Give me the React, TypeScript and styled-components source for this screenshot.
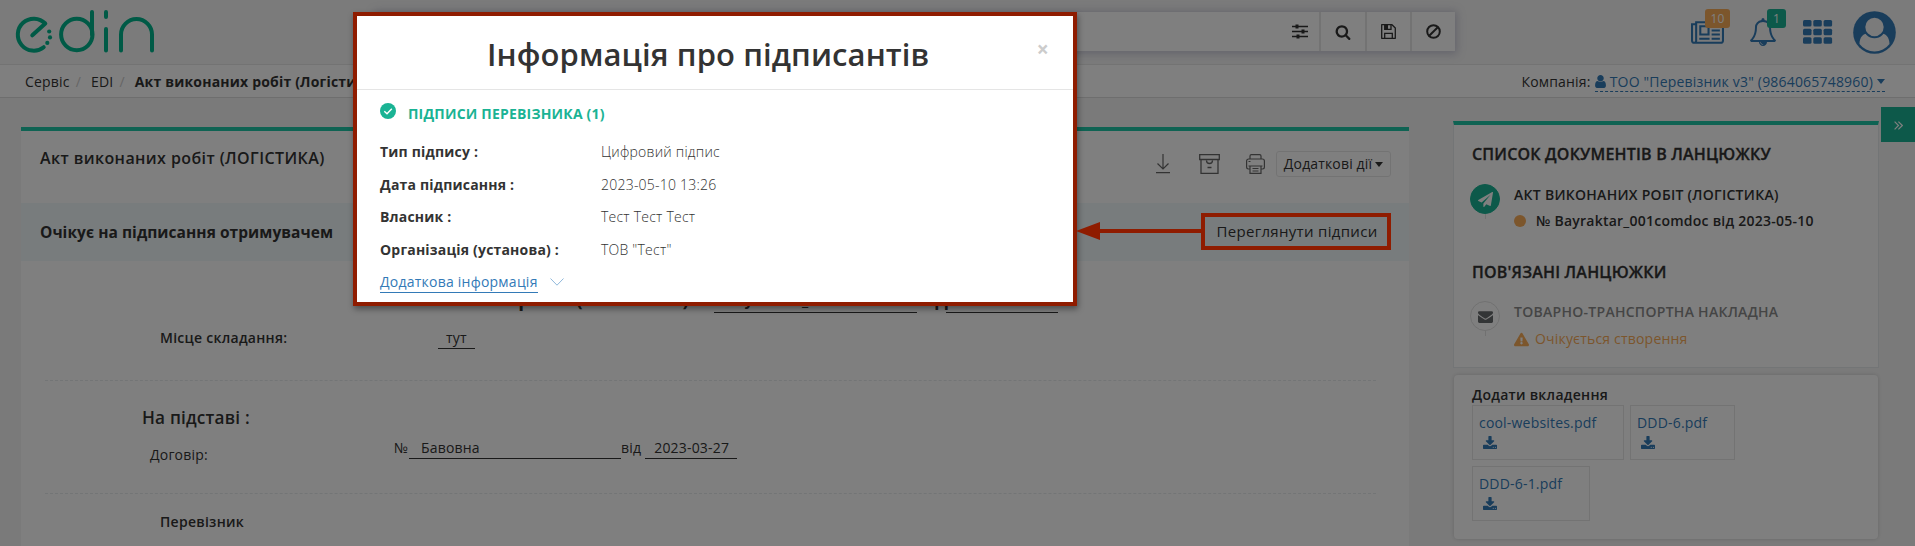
import React from 'react';
import styled, { createGlobalStyle } from 'styled-components';
import { FaExclamationTriangle } from 'react-icons/fa';

const GlobalStyle = createGlobalStyle`
  * { box-sizing: border-box; }
  body {
    margin: 0;
    background: #f5f5f5;
    color: #333;
    font-family: 'Open Sans', 'Liberation Sans', sans-serif;
    font-size: 14px;
    letter-spacing: 0.19px;
    line-height: 20px;
    overflow: hidden;
  }
  h1, h2, h3, h4, p { margin: 0; }
  svg { display: block; flex: none; }
`;

const teal = '#1ab394';
const blue = '#337ab7';
const orange = '#f8ac59';
const red = '#8f1c00';

const Page = styled.div`
  position: relative;
  height: 546px;
  overflow: hidden;
`;

/* ---------- header ---------- */
const Header = styled.header`
  display: flex;
  justify-content: space-between;
  height: 65px;
  border-bottom: 1px solid #e7e7e7;
  background: #f6f6f6;
`;
const LogoLink = styled.a`
  padding: 8px 0 0 14px;
  width: 376px;
`;
const SearchBar = styled.div`
  display: flex;
  justify-content: flex-end;
  width: 1079px;
  height: 39px;
  margin-top: 12px;
  background: #fff;
  box-shadow: 0 1px 8px 2px rgba(120, 120, 160, 0.35);
`;
const SearchButton = styled.button<{ $first?: boolean; $w: number }>`
  display: flex;
  align-items: center;
  justify-content: center;
  width: ${(p) => p.$w}px;
  padding: 0;
  border: 0;
  border-left: ${(p) => (p.$first ? 0 : 2)}px solid #e6e6e6;
  background: none;
  color: #333;
`;
const HeaderActions = styled.nav`
  display: flex;
  flex: 1;
  justify-content: flex-end;
  align-items: center;
  padding-right: 19px;
  color: ${blue};
`;
const Action = styled.a<{ $gap: number }>`
  position: relative;
  margin-left: ${(p) => p.$gap}px;
`;
const Badge = styled.span<{ $color: string; $w: number; $x: number; $y: number }>`
  position: absolute;
  left: ${(p) => p.$x}px;
  top: ${(p) => p.$y}px;
  width: ${(p) => p.$w}px;
  height: 19px;
  border-radius: 3px;
  background: ${(p) => p.$color};
  color: #fff;
  font-size: 12px;
  line-height: 19px;
  text-align: center;
`;

/* ---------- breadcrumb bar ---------- */
const SubBar = styled.div`
  display: flex;
  justify-content: space-between;
  height: 33px;
  padding: 7px 30px 0 25px;
  border-bottom: 1px solid #dcdcdc;
  background: #fff;
  line-height: 20px;
`;
const Crumbs = styled.div`
  display: flex;
  b { font-weight: 700; color: #333; }
`;
const Slash = styled.span<{ $after: number }>`
  margin: 0 ${(p) => p.$after}px 0 6px;
  color: #ccc;
`;
const Company = styled.div`
  display: flex;
  gap: 4px;
`;
const CompanyLink = styled.a`
  display: flex;
  align-items: center;
  gap: 4px;
  height: 20px;
  border-bottom: 1px dashed ${blue};
  color: ${blue};
`;
const Caret = styled.i`
  border: 4px solid transparent;
  border-top: 5px solid currentColor;
  border-bottom: 0;
`;

/* ---------- body ---------- */
const Body = styled.div`
  display: flex;
  align-items: flex-start;
`;
const DocumentCard = styled.main`
  width: 1388px;
  height: 440px;
  margin: 29px 0 0 21px;
  border-top: 4px solid #1fc7a6;
  background: #fff;
`;
const DocHeader = styled.div`
  display: flex;
  justify-content: space-between;
  height: 72px;
  padding: 16px 18px 0 19px;
`;
const DocTitle = styled.h2`
  font-size: 16px;
  font-weight: 600;
  letter-spacing: 0.41px;
  line-height: 22px;
`;
const Tools = styled.div`
  display: flex;
  align-items: center;
  height: 26px;
  margin-top: 4px;
  color: #676767;
`;
const Tool = styled.a<{ $gap: number }>`
  margin-right: ${(p) => p.$gap}px;
`;
const MoreButton = styled.button`
  display: flex;
  align-items: center;
  justify-content: center;
  gap: 3px;
  width: 115px;
  height: 26px;
  padding: 0;
  border: 1px solid #e7e7e7;
  border-radius: 3px;
  background: #fff;
  color: #333;
  font: 14px/24px 'Open Sans', sans-serif;
  letter-spacing: 0.15px;
  white-space: nowrap;
`;
const StatusStrip = styled.div`
  display: flex;
  justify-content: space-between;
  height: 58px;
  padding: 10px 18px 0 19px;
  background: #f0f9fb;
`;
const StatusText = styled.b`
  font-size: 15.5px;
  letter-spacing: 0.05px;
  line-height: 38px;
`;
const ViewSlot = styled.div`
  width: 190px;
  height: 37px;
  padding-left: 2px;
  text-align: center;
  font-size: 15px;
  letter-spacing: 0.31px;
  line-height: 37px;
`;
const DocBody = styled.div`
  padding: 0 33px 0 24px;
`;
const FormHeading = styled.div`
  display: flex;
  height: 52px;
  padding: 28px 0 0 219px;
  font-size: 19px;
  font-weight: 700;
  line-height: 20px;
`;
const HeadingLabel = styled.span<{ $w: number }>`
  flex: none;
  width: ${(p) => p.$w}px;
  text-align: right;
  white-space: nowrap;
`;
const Filled = styled.span<{ $w: number; $pad: number }>`
  flex: none;
  width: ${(p) => p.$w}px;
  height: 24px;
  padding-left: ${(p) => p.$pad}px;
  border-bottom: 1px solid #333;
  font-size: 15px;
  line-height: 22px;
  white-space: nowrap;
`;
const FieldRow = styled.div<{ $h: number; $top: number; $left: number; $dashed?: boolean }>`
  display: flex;
  height: ${(p) => p.$h}px;
  padding: ${(p) => p.$top}px 0 0 ${(p) => p.$left}px;
  border-bottom: ${(p) => (p.$dashed ? '1px dashed #e7eaec' : '0')};
`;
const FieldName = styled.span<{ $w?: number; $strong?: boolean; $drop?: number }>`
  width: ${(p) => (p.$w ? `${p.$w}px` : 'auto')};
  padding-top: ${(p) => p.$drop ?? 0}px;
  font-weight: ${(p) => (p.$strong ? 600 : 400)};
  letter-spacing: ${(p) => (p.$strong ? 0.27 : 0.19)}px;
  white-space: nowrap;
`;
const Value = styled.span<{ $w: number; $pad: number; $gap?: number }>`
  width: ${(p) => p.$w}px;
  height: 21px;
  margin-left: ${(p) => p.$gap ?? 0}px;
  padding-left: ${(p) => p.$pad}px;
  border-bottom: 1px solid #333;
`;
const GroupTitle = styled.h3`
  padding: 24px 0 0 97px;
  height: 57px;
  font-size: 17.2px;
  font-weight: 600;
  line-height: 26px;
`;

/* ---------- sidebar ---------- */
const Sidebar = styled.aside`
  width: 426px;
  margin: 23px 0 0 44px;
`;
const ChainCard = styled.section`
  height: 247px;
  padding: 20px 0 0 18px;
  border: 1px solid #e7eaec;
  border-top: 4px solid #1fc7a6;
  background: #fff;
`;
const ChainTitle = styled.h4<{ $top?: number }>`
  margin-top: ${(p) => p.$top ?? 0}px;
  font-size: 16px;
  font-weight: 600;
  line-height: 18px;
  -webkit-text-stroke: 0.3px #333;
`;
const ChainItem = styled.div<{ $top: number }>`
  display: flex;
  gap: 14px;
  margin: ${(p) => p.$top}px 0 0 -2px;
`;
const Timeline = styled.div`
  display: flex;
  flex-direction: column;
  align-items: center;
  &::after { content: ''; width: 1px; height: 5px; background: #e2e2e2; }
`;
const Round = styled.span<{ $filled?: boolean }>`
  display: flex;
  align-items: center;
  justify-content: center;
  width: 30px;
  height: 30px;
  margin-top: -1px;
  border: 1px solid ${(p) => (p.$filled ? teal : '#e2e2e2')};
  border-radius: 50%;
  background: ${(p) => (p.$filled ? teal : '#fff')};
  color: ${(p) => (p.$filled ? '#fff' : '#676a6c')};
`;
const ChainName = styled.p<{ $muted?: boolean }>`
  font-weight: 600;
  letter-spacing: 0.28px;
  color: ${(p) => (p.$muted ? '#8b8b8b' : '#333')};
`;
const ChainMeta = styled.p<{ $warn?: boolean }>`
  display: flex;
  align-items: center;
  gap: ${(p) => (p.$warn ? 6 : 10)}px;
  margin-top: ${(p) => (p.$warn ? 7 : 6)}px;
  color: ${(p) => (p.$warn ? orange : '#333')};
  font-weight: ${(p) => (p.$warn ? 400 : 600)};
  letter-spacing: ${(p) => (p.$warn ? 0.19 : 0.24)}px;
`;
const Dot = styled.i`
  width: 12px;
  height: 12px;
  border-radius: 50%;
  background: ${orange};
`;
const FilesCard = styled.section`
  width: 424px;
  height: 164px;
  margin: 7px 0 0 1px;
  padding: 14px 0 0 18px;
  border-radius: 4px;
  background: #fff;
  box-shadow: 0 0 4px rgba(0, 0, 0, 0.16);
`;
const FilesTitle = styled.h4`
  height: 16px;
  font-size: 14px;
  font-weight: 600;
  letter-spacing: 0.27px;
  line-height: 12px;
`;
const Files = styled.div`
  display: flex;
  flex-wrap: wrap;
  gap: 6px;
  width: 300px;
`;
const FileBox = styled.a<{ $w: number }>`
  display: flex;
  flex-direction: column;
  gap: 3px;
  width: ${(p) => p.$w}px;
  height: 55px;
  padding: 7px 0 0 6px;
  border: 1px solid #e7e7e7;
  color: ${blue};
  svg { margin-left: 4px; }
`;
const CollapseTab = styled.button`
  display: flex;
  align-items: center;
  justify-content: center;
  width: 34px;
  height: 35px;
  margin: 9px 0 0 2px;
  padding: 1px 0 0;
  border: 0;
  background: ${teal};
  color: #fff;
`;

/* ---------- overlay and dialog ---------- */
const Backdrop = styled.div`
  position: absolute;
  inset: 0;
  background: rgba(0, 0, 0, 0.5);
`;
const Highlight = styled.div`
  position: absolute;
  left: 1201px;
  top: 213px;
  width: 190px;
  height: 37px;
  border: 4px solid ${red};
`;
const Arrow = styled.svg`
  position: absolute;
  left: 1076px;
  top: 222px;
`;
const Dialog = styled.div`
  position: absolute;
  left: 353px;
  top: 12px;
  width: 724px;
  height: 294px;
  border: 4px solid ${red};
  background: #fff;
  box-shadow: 1px 3px 6px rgba(0, 0, 0, 0.4);
`;
const DialogHeader = styled.div`
  display: flex;
  justify-content: flex-end;
  height: 74px;
  padding: 0 24px 0 130px;
  border-bottom: 1px solid #e5e5e5;
`;
const DialogTitle = styled.h1`
  flex: 1;
  font-size: 31px;
  font-weight: 600;
  letter-spacing: 0.1px;
  line-height: 76px;
  white-space: nowrap;
`;
const Close = styled.span`
  color: #ccc;
  font-size: 21px;
  font-weight: 700;
  line-height: 66px;
`;
const DialogBody = styled.div`
  padding: 13px 0 0 23px;
`;
const Group = styled.div`
  display: flex;
  gap: 12px;
  margin-bottom: 14px;
  color: ${teal};
  font-weight: 700;
  span { line-height: 22px; }
`;
const InfoRow = styled.div`
  display: grid;
  grid-template-columns: 221px 1fr;
  height: 32.7px;
  line-height: 26px;
  b { font-weight: 700; }
  span { font-weight: 300; letter-spacing: 0.23px; }
`;
const MoreInfo = styled.a`
  display: flex;
  align-items: center;
  gap: 12px;
  height: 22px;
  padding-top: 3px;
  color: ${blue};
  letter-spacing: 0.23px;
  span { border-bottom: 1px solid ${blue}; line-height: 21px; }
`;

const Fa = ({ d, w, h, vb = '0 0 1792 1792' }: { d: string; w: number; h: number; vb?: string }) => (
  <svg width={w} height={h} viewBox={vb} fill="currentColor"><path d={d} /></svg>
);

const searchPath = 'M1216 832q0-185-131.5-316.5t-316.5-131.5-316.5 131.5-131.5 316.5 131.5 316.5 316.5 131.5 316.5-131.5 131.5-316.5zm512 832q0 52-38 90t-90 38q-54 0-90-38l-343-342q-179 124-399 124-143 0-273.5-55.5t-225-150-150-225-55.5-273.5 55.5-273.5 150-225 225-150 273.5-55.5 273.5 55.5 225 150 150 225 55.5 273.5q0 220-124 399l343 343q37 37 37 90z';
const newsPath = 'M1024 512h-384v384h384v-384zm128 640v128h-640v-128h640zm0-768v640h-640v-640h640zm640 768v128h-512v-128h512zm0-256v128h-512v-128h512zm0-256v128h-512v-128h512zm0-256v128h-512v-128h512zm-1536 960v-960h-128v960q0 26 19 45t45 19 45-19 19-45zm1664 0v-1088h-1536v1088q0 33-11 64h1483q26 0 45-19t19-45zm128-1216v1216q0 80-56 136t-136 56h-1664q-80 0-136-56t-56-136v-1088h256v-128h1792z';
const bellPath = 'M912 1696q0-16-16-16-59 0-101.5-42.5t-42.5-101.5q0-16-16-16t-16 16q0 73 51.5 124.5t124.5 51.5q16 0 16-16zm-666-288h1300q-266-300-266-832 0-51-24-105t-69-103-121.5-80.5-169.5-31.5-169.5 31.5-121.5 80.5-69 103-24 105q0 532-266 832zm1482 0q0 52-38 90t-90 38h-448q0 106-75 181t-181 75-181-75-75-181h-448q-52 0-90-38t-38-90q50-42 91-88t85-119.5 74.5-158.5 50-206 19.5-260q0-152 117-282.5t307-158.5q-8-19-8-39 0-40 28-68t68-28 68 28 28 68q0 20-8 39 190 28 307 158.5t117 282.5q0 139 19.5 260t50 206 74.5 158.5 85 119.5 91 88z';
const userPath = 'M1536 1399q0 109-62.5 187t-150.5 78h-854q-88 0-150.5-78t-62.5-187q0-85 8.5-160.5t31.5-152 58.5-131 94-89 134.5-34.5q131 128 313 128t313-128q76 0 134.5 34.5t94 89 58.5 131 31.5 152 8.5 160.5zm-256-887q0 159-112.5 271.5t-271.5 112.5-271.5-112.5-112.5-271.5 112.5-271.5 271.5-112.5 271.5 112.5 112.5 271.5z';
const planePath = 'M1764 11q33 24 27 64l-256 1536q-5 29-32 45-14 8-31 8-11 0-24-5l-453-185-242 295q-18 23-49 23-13 0-22-4-19-7-30.5-23.5t-11.5-36.5v-349l864-1059-1069 925-395-162q-37-14-40-55-2-40 32-59l1664-960q15-9 32-9 20 0 36 11z';
const mailPath = 'M1792 710v794q0 66-47 113t-113 47h-1472q-66 0-113-47t-47-113v-794q44 49 101 87 362 246 497 345 57 42 92.5 65.5t94.5 48 110 24.5h2q51 0 110-24.5t94.5-48 92.5-65.5q170-123 498-345 57-39 100-87zm0-294q0 79-49 151t-122 123q-376 261-468 325-10 7-42.5 31t-54 38.5-52 32.5-57.5 27-50 9h-2q-23 0-50-9t-57.5-27-52-32.5-54-38.5-42.5-31q-91-64-262-182.5t-205-142.5q-62-42-117-115.5t-55-136.5q0-78 41.5-130t118.5-52h1472q65 0 112.5 47t47.5 113z';
const downloadPath = 'M1280 1344q0-26-19-45t-45-19-45 19-19 45 19 45 45 19 45-19 19-45zm256 0q0-26-19-45t-45-19-45 19-19 45 19 45 45 19 45-19 19-45zm128-224v320q0 40-28 68t-68 28h-1472q-40 0-68-28t-28-68v-320q0-40 28-68t68-28h465l135 136q58 56 136 56t136-56l136-136h464q40 0 68 28t28 68zm-325-569q17 41-14 70l-448 448q-18 19-45 19t-45-19l-448-448q-31-29-14-70 17-39 59-39h256v-448q0-26 19-45t45-19h256q26 0 45 19t19 45v448h256q42 0 59 39z';

const Logo = () => (
  <svg width="144" height="48" viewBox="14 8 144 48" fill="none" stroke="#00b48c" strokeWidth="4" strokeLinecap="round">
    <path d="M32.300 35.300 45.300 23.500A16 16 0 1 0 43.700 47.200" strokeLinejoin="round" />
    <circle cx="76.800" cy="34.500" r="15.700" />
    <path d="M92 12v22.500M106 12v5M106 29v21.500M121 50.500v-16a15.500 15.500 0 0 1 31 0v16" />
    <g fill="#00b48c" stroke="none">
      <circle cx="49.200" cy="31.500" r="2.100" />
      <circle cx="50" cy="37.400" r="2.100" />
      <circle cx="47.300" cy="42.900" r="2.100" />
    </g>
  </svg>
);

const Sliders = () => (
  <svg width="16" height="15" viewBox="0 0 16 15" stroke="currentColor" strokeWidth="1.500" fill="none">
    <path d="M0 2.500h16M0 7.500h16M0 12.500h16" />
    <path d="M5 .5v4M11 5.500v4M6 10.500v4" strokeWidth="3" />
  </svg>
);
const Floppy = () => (
  <svg width="15" height="15" viewBox="0 0 15 15" stroke="currentColor" strokeWidth="1.300" fill="none">
    <path d="M.7.7h10.300l3.300 3.300v10.300H.7z" strokeLinejoin="round" />
    <path d="M3.700.7v4.600h6.300V.7M3.700 14V9.300h7.600V14" />
    <path d="M5.500.7v4.500" strokeWidth="3" />
  </svg>
);
const Ban = () => (
  <svg width="15" height="15" viewBox="0 0 15 15" stroke="currentColor" strokeWidth="2" fill="none">
    <circle cx="7.500" cy="7.500" r="6.300" />
    <path d="M3.200 11.800 11.800 3.200" />
  </svg>
);
const Avatar = () => (
  <svg width="43" height="43" viewBox="0 0 43 43">
    <circle cx="21.500" cy="21.500" r="21.300" fill="currentColor" />
    <path d="M6.500 33c0-7 4-10.500 7.500-10.500a12 12 0 0 0 15 0c3.500 0 7.500 3.500 7.500 10.500a18.800 18.800 0 0 1-30 0z" fill="#f6f6f6" />
    <circle cx="21.500" cy="16" r="10.200" fill="#f6f6f6" stroke="currentColor" strokeWidth="2" />
  </svg>
);
const Grid = () => (
  <svg width="30" height="24" viewBox="0 0 30 24" fill="currentColor">
    {[0, 10.300, 20.600].map((x) => [0, 8.700, 17.300].map((y) => (
      <rect key={`${x}-${y}`} x={x} y={y} width="8.500" height="6.500" rx="1.500" />
    )))}
  </svg>
);
const Download = () => (
  <svg width="14" height="20" viewBox="0 0 14 20" stroke="currentColor" fill="none" strokeWidth="1.200">
    <path d="M7 0v15M1.500 9.500 7 15l5.500-5.500M0 18.700h14" />
  </svg>
);
const Archive = () => (
  <svg width="21" height="20" viewBox="0 0 21 20" stroke="currentColor" fill="none" strokeWidth="1.300">
    <path d="M.7.7h19.600v4.800H.7zM2 5.500v13.800h17V5.500M7.500 6.500c0 4 6 4 6 0M8.500 13.500h4" />
  </svg>
);
const Printer = () => (
  <svg width="19" height="20" viewBox="0 0 19 20" stroke="currentColor" fill="none" strokeWidth="1.200">
    <path d="M4 5V2a1.400 1.400 0 0 1 1.400-1.400h8.200A1.400 1.400 0 0 1 15 2v3M4 15H2.500A1.900 1.900 0 0 1 .6 13.100V7a2 2 0 0 1 2-2h13.800a2 2 0 0 1 2 2v6.100a1.900 1.900 0 0 1-1.900 1.900H15M2.500 12h14M4 12v7.400h11V12M6.500 14.500h6M6.500 17h6M2.500 7.500h2" />
  </svg>
);

const files = [
  { name: 'cool-websites.pdf', w: 152 },
  { name: 'DDD-6.pdf', w: 105 },
  { name: 'DDD-6-1.pdf', w: 118 },
];
const info = [
  ['Тип підпису :', 'Цифровий підпис'],
  ['Дата підписання :', '2023-05-10 13:26'],
  ['Власник :', 'Тест Тест Тест'],
  ['Організація (установа) :', 'ТОВ "Тест"'],
];

export default function App() {
  return (
    <Page>
      <GlobalStyle />
      <Header>
        <LogoLink><Logo /></LogoLink>
        <SearchBar>
          <SearchButton $first $w={39}><Sliders /></SearchButton>
          <SearchButton $w={46}><Fa d={searchPath} w={16} h={16} /></SearchButton>
          <SearchButton $w={45}><Floppy /></SearchButton>
          <SearchButton $w={45}><Ban /></SearchButton>
        </SearchBar>
        <HeaderActions>
          <Action $gap={0}>
            <Fa d={newsPath} w={33} h={23} vb="0 128 2048 1408" />
            <Badge $color={orange} $w={25} $x={14} $y={-12}>10</Badge>
          </Action>
          <Action $gap={25}>
            <Fa d={bellPath} w={28} h={28} />
            <Badge $color={teal} $w={19} $x={18} $y={-9}>1</Badge>
          </Action>
          <Action $gap={26}><Grid /></Action>
          <Action $gap={20}><Avatar /></Action>
        </HeaderActions>
      </Header>

      <SubBar>
        <Crumbs>
          <span>Сервіс</span><Slash $after={10}>/</Slash>
          <span>EDI</span><Slash $after={10}>/</Slash>
          <b>Акт виконаних робіт (Логістика)</b>
        </Crumbs>
        <Company>
          <span>Компанія:</span>
          <CompanyLink>
            <Fa d={userPath} w={11} h={13} vb="256 128 1280 1536" />
            ТОО "Перевізник v3" (9864065748960)
            <Caret />
          </CompanyLink>
        </Company>
      </SubBar>

      <Body>
        <DocumentCard>
          <DocHeader>
            <DocTitle>Акт виконаних робіт (ЛОГІСТИКА)</DocTitle>
            <Tools>
              <Tool $gap={29}><Download /></Tool>
              <Tool $gap={26}><Archive /></Tool>
              <Tool $gap={11}><Printer /></Tool>
              <MoreButton>Додаткові дії <Caret /></MoreButton>
            </Tools>
          </DocHeader>
          <StatusStrip>
            <StatusText>Очікує на підписання отримувачем</StatusText>
            <ViewSlot>Переглянути підписи</ViewSlot>
          </StatusStrip>
          <DocBody>
            <FormHeading>
              <HeadingLabel $w={450}>Акт виконаних робіт (Логістика) №</HeadingLabel>
              <Filled $w={203} $pad={11}>Bayraktar_001comdoc</Filled>
              <HeadingLabel $w={29}>від</HeadingLabel>
              <Filled $w={112} $pad={6}>2023-05-10</Filled>
            </FormHeading>
            <FieldRow $h={68} $top={15} $left={115} $dashed>
              <FieldName $w={278} $strong>Місце складання:</FieldName>
              <Value $w={37} $pad={8}>тут</Value>
            </FieldRow>
            <GroupTitle>На підставі :</GroupTitle>
            <FieldRow $h={56} $top={0} $left={105} $dashed>
              <FieldName $w={244} $drop={7}>Договір:</FieldName>
              <FieldName $w={15}>№</FieldName>
              <Value $w={212} $pad={12}>Бавовна</Value>
              <FieldName>від</FieldName>
              <Value $w={92} $pad={9} $gap={4}>2023-03-27</Value>
            </FieldRow>
            <FieldRow $h={52} $top={18} $left={115}>
              <FieldName $strong>Перевізник</FieldName>
            </FieldRow>
          </DocBody>
        </DocumentCard>

        <Sidebar>
          <ChainCard>
            <ChainTitle>СПИСОК ДОКУМЕНТІВ В ЛАНЦЮЖКУ</ChainTitle>
            <ChainItem $top={22}>
              <Timeline><Round $filled><Fa d={planePath} w={15} h={15} /></Round></Timeline>
              <div>
                <ChainName>АКТ ВИКОНАНИХ РОБІТ (ЛОГІСТИКА)</ChainName>
                <ChainMeta><Dot />№ Bayraktar_001comdoc від 2023-05-10</ChainMeta>
              </div>
            </ChainItem>
            <ChainTitle $top={32}>ПОВ'ЯЗАНІ ЛАНЦЮЖКИ</ChainTitle>
            <ChainItem $top={21}>
              <Timeline><Round><Fa d={mailPath} w={15} h={15} /></Round></Timeline>
              <div>
                <ChainName $muted>ТОВАРНО-ТРАНСПОРТНА НАКЛАДНА</ChainName>
                <ChainMeta $warn><FaExclamationTriangle size={15} />Очікується створення</ChainMeta>
              </div>
            </ChainItem>
          </ChainCard>
          <FilesCard>
            <FilesTitle>Додати вкладення</FilesTitle>
            <Files>
              {files.map((f) => (
                <FileBox key={f.name} $w={f.w}>
                  {f.name}
                  <Fa d={downloadPath} w={14} h={13} vb="0 0 1664 1536" />
                </FileBox>
              ))}
            </Files>
          </FilesCard>
        </Sidebar>
        <CollapseTab>
          <svg width="9" height="9" viewBox="0 0 9 9" fill="none" stroke="currentColor" strokeWidth="1.200">
            <path d="M.6.6l3.900 3.900-3.900 3.900M4.400.6l3.900 3.900-3.900 3.900" />
          </svg>
        </CollapseTab>
      </Body>

      <Backdrop />
      <Highlight />
      <Dialog>
        <DialogHeader>
          <DialogTitle>Інформація про підписантів</DialogTitle>
          <Close>×</Close>
        </DialogHeader>
        <DialogBody>
          <Group>
            <svg width="16" height="16" viewBox="0 0 16 16">
              <circle cx="8" cy="8" r="8" fill={teal} />
              <path d="M4.300 8.200 7 10.700l4.800-5" stroke="#fff" strokeWidth="1.400" fill="none" />
            </svg>
            <span>ПІДПИСИ ПЕРЕВІЗНИКА (1)</span>
          </Group>
          {info.map(([k, v]) => (
            <InfoRow key={k}><b>{k}</b><span>{v}</span></InfoRow>
          ))}
          <MoreInfo>
            <span>Додаткова інформація</span>
            <svg width="14" height="8" viewBox="0 0 14 8" fill="none" stroke="#8fb8da"><path d="M.5.5 7 7.200 13.500.5" /></svg>
          </MoreInfo>
        </DialogBody>
      </Dialog>
      <Arrow width="126" height="18" viewBox="0 0 126 18" fill={red}>
        <path d="M0 9 24 0v7h102v4H24v7z" />
      </Arrow>
    </Page>
  );
}
